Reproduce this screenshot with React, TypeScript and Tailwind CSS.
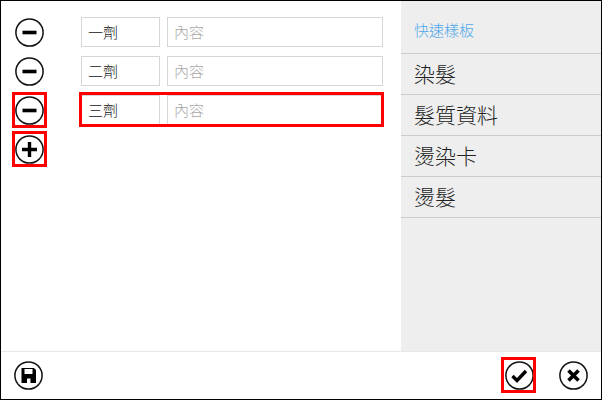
const rows = ['一劑', '二劑', '三劑'];
const templates = ['染髮', '髮質資料', '燙染卡', '燙髮'];

function CircleIcon({ kind }: { kind: 'minus' | 'plus' | 'save' | 'check' | 'close' }) {
  return (
    <svg width="30" height="30" viewBox="0 0 30 30" fill="none" className="block">
      <g transform="translate(-0.5 0.5)">
        <circle cx="15" cy="15" r="13.6" stroke="#111" strokeWidth="1.5" />
        {kind === 'minus' && <rect x="8" y="13.200" width="14" height="3.600" fill="#000" />}
        {kind === 'plus' && <path d="M7.500 13.300h5.800V7.500h3.400v5.800h5.800v3.400h-5.800v5.800h-3.400v-5.800H7.500z" fill="#000" />}
        {kind === 'save' && (
          <path
            fillRule="evenodd"
            d="M8 7.500h12.500l2 2V22.500H8zM11 8.500v5h8v-5zM13.500 18v4.500h3.500V18z"
            fill="#000"
          />
        )}
        {kind === 'check' && <path d="M8 15.500l4.500 4.500 9-9.500" stroke="#000" strokeWidth="3.400" />}
        {kind === 'close' && <path d="M10 10l10 10M20 10L10 20" stroke="#000" strokeWidth="3.600" />}
      </g>
    </svg>
  );
}

export default function App() {
  return (
    <div
      className="w-[602px] h-[400px] flex flex-col border border-black bg-white"
      style={{ fontFamily: '"Noto Sans CJK TC", sans-serif' }}
    >
      <div className="flex-1 flex min-h-0">
        {/* Left rows */}
        <div className="w-[400px] pt-[16px] flex flex-col gap-[9px]">
          {rows.map((name, i) => (
            <div key={name} className="flex items-center h-[30px]">
              <div className="relative ml-[14px] w-[30px] h-[30px]">
                <CircleIcon kind="minus" />
                {i === 2 && (
                  <div className="absolute -left-[3px] -top-[3px] w-[35px] h-[36px] border-[3px] border-[#f00]" />
                )}
              </div>
              <div className="relative ml-[36px] flex gap-[7px]">
                <div className="w-[79px] h-[30px] border border-[#d6d6d6] pl-[6px] text-[15px] leading-[27px] text-[#111] font-light">
                  {name}
                </div>
                <div className="w-[216px] h-[30px] border border-[#d6d6d6] pl-[6px] text-[15px] leading-[27px] text-[#a8a8a8] font-light">
                  內容
                </div>
                {i === 2 && (
                  <div className="absolute -left-[2px] -top-[3px] w-[305px] h-[35px] border-[3px] border-[#f00]" />
                )}
              </div>
            </div>
          ))}
          <div className="relative ml-[14px] w-[30px] h-[30px]">
            <CircleIcon kind="plus" />
            <div className="absolute -left-[3px] -top-[3px] w-[35px] h-[36px] border-[3px] border-[#f00]" />
          </div>
        </div>

        {/* Templates */}
        <div className="w-[200px] bg-[#eeeeee]">
          <div className="h-[53px] pl-[13px] pt-[19px] text-[15px] leading-[20px] text-[#4fa8ea] border-b border-[#cccccc] font-light">
            快速樣板
          </div>
          {templates.map((t) => (
            <div
              key={t}
              className="h-[41px] pl-[13px] text-[21px] leading-[38px] text-[#222] border-b border-[#cccccc] font-light"
            >
              {t}
            </div>
          ))}
        </div>
      </div>

      {/* Footer */}
      <div className="h-[48px] border-t border-[#e8e8e8] flex items-start pt-[8px] pl-[13px] pr-[12px]">
        <CircleIcon kind="save" />
        <div className="relative ml-auto w-[30px] h-[30px]">
          <CircleIcon kind="check" />
          <div className="absolute -left-[4px] -top-[3px] w-[35px] h-[36px] border-[3px] border-[#f00]" />
        </div>
        <div className="ml-[24px]">
          <CircleIcon kind="close" />
        </div>
      </div>
    </div>
  );
}
